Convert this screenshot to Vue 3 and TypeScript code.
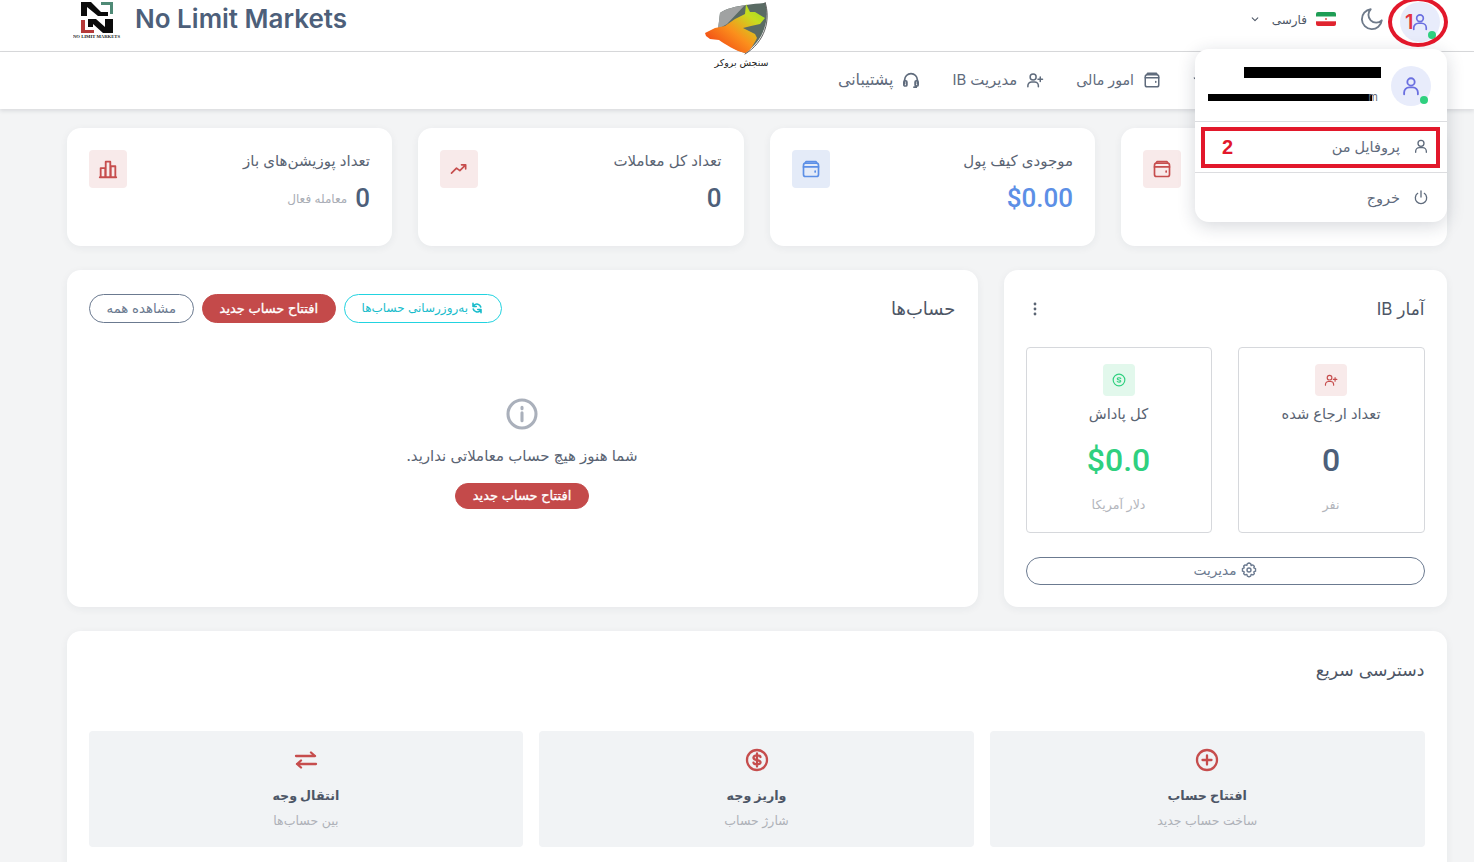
<script setup lang="ts">
interface Stat { title: string; value: string; sub?: string; icon: string; tone: string; covered?: boolean }
const stats: Stat[] = [
  { title: 'موجودی حساب‌ها', value: '$0.00', icon: 'wallet', tone: 'red', covered: true },
  { title: 'موجودی کیف پول', value: '$0.00', icon: 'wallet', tone: 'blue' },
  { title: 'تعداد کل معاملات', value: '0', icon: 'trend', tone: 'red' },
  { title: 'تعداد پوزیشن‌های باز', value: '0', sub: 'معامله فعال', icon: 'bars', tone: 'red' }
]
const quick = [
  { title: 'افتتاح حساب', sub: 'ساخت حساب جدید', icon: 'plus' },
  { title: 'واریز وجه', sub: 'شارژ حساب', icon: 'dollar' },
  { title: 'انتقال وجه', sub: 'بین حساب‌ها', icon: 'swap' }
]
</script>

<template>
  <div class="page" dir="rtl">
    <header class="topbar">
      <div class="actions">
        <div class="avatar">
          <svg class="ico-20" viewBox="0 0 24 24"><circle cx="12" cy="7.5" r="4" /><path d="M4.5 21v-2a5.5 5.5 0 0 1 5.5-5.5h4a5.5 5.5 0 0 1 5.5 5.5v2" /></svg>
          <span class="dot"></span>
        </div>
        <svg class="moon" viewBox="0 0 24 24"><path d="M21 13.2A9.2 9.2 0 1 1 10.8 3a7.2 7.2 0 0 0 10.2 10.2z" /></svg>
        <div class="lang">
          <svg class="flag" viewBox="0 0 20 14"><rect width="20" height="4.7" fill="#1f9d55" /><rect y="4.7" width="20" height="4.6" fill="#fff" /><rect y="9.3" width="20" height="4.7" fill="#e0242f" /><circle cx="10" cy="7" r="1" fill="#d9534f" /></svg>
          <span>فارسی</span>
          <svg class="chev" viewBox="0 0 10 6"><path d="M1.5 1l3.5 3.5L8.500 1" /></svg>
        </div>
      </div>
      <div class="brand" dir="ltr">
        <svg class="brand-logo" viewBox="0 0 48 38">
          <path d="M8 1h10l10 10h7v4H25L14 6v9H8z" fill="#0b0b0b" />
          <path d="M28 1h12v12h-3V4h-9z" fill="#4f8a76" />
          <path d="M8 19h4v10h9v3H8z" fill="#b53a3a" />
          <path d="M15 18h8l9 8v-8h8v14H30L20 23v3h-5z" fill="#0b0b0b" />
          <text x="0" y="37" textLength="47" lengthAdjust="spacingAndGlyphs" class="brand-mini">NO LIMIT MARKETS</text>
        </svg>
        <span class="brand-name">No Limit Markets</span>
      </div>
    </header>

    <nav class="navbar">
      <a class="nav-item">
        <span class="covered">داشبورد</span>
        <svg class="chev nav-chev" viewBox="0 0 10 6"><path d="M1.5 1l3.5 3.5L8.500 1" /></svg>
      </a>
      <a class="nav-item">
        <svg class="ico-18" viewBox="0 0 24 24"><rect x="3" y="5" width="18" height="16" rx="2.500" /><path d="M3 9h18M17 14v1M5 5l1-2h12l1 2" /></svg>
        <span>امور مالی</span>
      </a>
      <a class="nav-item nav-ib">
        <svg class="ico-18" viewBox="0 0 24 24"><circle cx="9.500" cy="8" r="4" /><path d="M2.500 21v-1.500a5 5 0 0 1 5-5h4a5 5 0 0 1 5 5V21M19 8v6M16 11h6" /></svg>
        <span>مدیریت IB</span>
      </a>
      <a class="nav-item nav-support">
        <svg class="ico-18 thick" viewBox="0 0 24 24"><path d="M3.500 17v-5a8.500 8.500 0 0 1 17 0v5" /><rect x="2.500" y="13" width="4" height="7" rx="1.500" /><rect x="17.500" y="13" width="4" height="7" rx="1.500" /><path d="M19 20v1.500h-3" /></svg>
        <span>پشتیبانی</span>
      </a>
    </nav>

    <main class="content">
      <section class="stats">
        <article v-for="s in stats" :key="s.title" class="card stat">
          <div class="stat-body" :class="{ covered: s.covered }">
            <div class="stat-title">{{ s.title }}</div>
            <div class="stat-line">
              <span class="stat-value" :class="s.tone === 'blue' ? 'is-blue' : ''" dir="ltr">{{ s.value }}</span>
              <span v-if="s.sub" class="stat-sub">{{ s.sub }}</span>
            </div>
          </div>
          <div class="stat-icon" :class="s.tone">
            <svg v-if="s.icon === 'wallet'" class="ico-20" viewBox="0 0 24 24"><rect x="3" y="5" width="18" height="16" rx="2.500" /><path d="M3 9.500h18M17 14.500v1M5 5l1-2h12l1 2" /></svg>
            <svg v-else-if="s.icon === 'trend'" class="ico-20" viewBox="0 0 24 24"><path d="M3 17l6-6 4 3 7-7M15 7h5v5" /></svg>
            <svg v-else class="ico-22" viewBox="0 0 24 24"><path d="M3 21h18M4 21V11h5v10M9.500 21V4h5v17M15 21V9h5v12" /></svg>
          </div>
        </article>
      </section>

      <section class="middle">
        <article class="card ib">
          <div class="card-head">
            <h3 class="h-ib">آمار IB</h3>
            <svg class="kebab" viewBox="0 0 4 14"><circle cx="2" cy="2" r="1.400" /><circle cx="2" cy="7" r="1.400" /><circle cx="2" cy="12" r="1.400" /></svg>
          </div>
          <div class="ib-grid">
            <div class="ib-box">
              <div class="ib-icon red">
                <svg class="ico-14" viewBox="0 0 24 24"><circle cx="9.500" cy="8" r="4" /><path d="M2.500 21v-1.500a5 5 0 0 1 5-5h4a5 5 0 0 1 5 5V21M19 8v6M16 11h6" /></svg>
              </div>
              <div class="ib-title">تعداد ارجاع شده</div>
              <div class="ib-value">0</div>
              <div class="ib-sub">نفر</div>
            </div>
            <div class="ib-box">
              <div class="ib-icon green">
                <svg class="ico-14" viewBox="0 0 24 24"><circle cx="12" cy="12" r="10" /><path d="M15 9.500c-.6-1.800-5.400-2-6 .2-.5 2.800 6.500 1.600 6 4.400-.6 2.100-5.400 1.900-6 .2" /></svg>
              </div>
              <div class="ib-title">کل پاداش</div>
              <div class="ib-value is-green" dir="ltr">$0.0</div>
              <div class="ib-sub">دلار آمریکا</div>
            </div>
          </div>
          <button class="pill outline block">
            <svg class="gear" viewBox="0 0 24 24"><circle cx="12" cy="12" r="3" /><path d="M12 1.500l2.500 1.100.7 2.600 2.600-.8 2.200 1.900-.8 2.600 2.600 1.100v3.800l-2.600 1.100.8 2.600-2.200 1.900-2.600-.8-.7 2.600-2.500 1.100-2.500-1.100-.7-2.600-2.600.8-2.200-1.900.8-2.600-2.600-1.100V9.900l2.600-1.100-.8-2.600 2.200-1.900 2.600.8.700-2.600z" /></svg>
            <span>مدیریت</span>
          </button>
        </article>

        <article class="card accounts">
          <div class="card-head">
            <h3 class="h-acc">حساب‌ها</h3>
            <div class="acc-actions">
              <button class="pill cyan">
                <svg class="ico-12 sync" viewBox="0 0 24 24"><path d="M19.500 10A8 8 0 0 0 6 6.500L4 9M4 2.500V9h6.500M4.500 14A8 8 0 0 0 18 17.500l2-2.500M20 21.500V15h-6.500" /></svg>
                <span>به‌روزرسانی حساب‌ها</span>
              </button>
              <button class="pill solid">افتتاح حساب جدید</button>
              <button class="pill outline thin">مشاهده همه</button>
            </div>
          </div>
          <div class="empty">
            <svg class="info" viewBox="0 0 24 24"><circle cx="12" cy="12" r="10.500" /><path d="M12 11v6M12 7v1" /></svg>
            <p>شما هنوز هیچ حساب معاملاتی ندارید.</p>
            <button class="pill solid small">افتتاح حساب جدید</button>
          </div>
        </article>
      </section>

      <section class="card quick">
        <h3>دسترسی سریع</h3>
        <div class="quick-grid">
          <div v-for="q in quick" :key="q.title" class="quick-item">
            <svg class="ico-24" viewBox="0 0 24 24">
              <template v-if="q.icon === 'plus'"><circle cx="12" cy="12" r="10" /><path d="M12 7.500v9M7.500 12h9" /></template>
              <template v-else-if="q.icon === 'dollar'"><circle cx="12" cy="12" r="10" /><path d="M15.500 9c-.5-2-6.500-2.300-7 .5-.5 3.500 7.500 1.800 7 5-.5 2.500-6.500 2.300-7 .2M12 5.500v13" /></template>
              <template v-else><path d="M2 8h19M17 4.500L21 8M22 16H3M7 12.500L3 16M7 19.500L3 16" /></template>
            </svg>
            <div class="quick-title">{{ q.title }}</div>
            <div class="quick-sub">{{ q.sub }}</div>
          </div>
        </div>
      </section>
    </main>

    <!-- overlays -->
    <div class="center-logo">
      <svg viewBox="0 0 66 54" class="bull">
        <defs>
          <linearGradient id="bullGrad" x1="0" y1="1" x2="1" y2="0">
            <stop offset="0" stop-color="#ee2c12" />
            <stop offset=".45" stop-color="#fb8f1c" />
            <stop offset=".75" stop-color="#c8dc1f" />
            <stop offset="1" stop-color="#8fe025" />
          </linearGradient>
        </defs>
        <path d="M15 11C22 6 35 3 60 1c4 13 2 35-20 50C28 48 15 38 13 28z" fill="#5a6b64" />
        <path d="M15 11c7-5 15-6 25-8L22 22l-9 5z" fill="#a0a2a2" />
        <path d="M0 31l10-5 10-2 10-7 10-5 1-10 4 8h5l10 6-5 6-9 2-8 2 12 6 2 4c-4 8-8 14-12 15-10-2-20-9-26-13l-9-1-4-3z" fill="url(#bullGrad)" />
        <path d="M60 0c6 18 0 40-20 52" fill="none" stroke="#333" stroke-width=".8" />
      </svg>
      <span class="bull-text">سنجش بروکر</span>
    </div>

    <div class="menu">
      <div class="menu-user">
        <div class="avatar">
          <svg class="ico-22" viewBox="0 0 24 24"><circle cx="12" cy="7.500" r="4" /><path d="M4.500 21v-2a5.500 5.500 0 0 1 5.500-5.500h4a5.500 5.500 0 0 1 5.500 5.500v2" /></svg>
          <span class="dot"></span>
        </div>
        <div class="menu-id">
          <div class="mask mask-a"></div>
          <div class="mask mask-b"></div>
          <span class="mail-end">m</span>
        </div>
      </div>
      <div class="menu-row">
        <svg class="ico-16" viewBox="0 0 24 24"><circle cx="12" cy="8" r="4.500" /><path d="M4 21.500v-1.500a5.500 5.500 0 0 1 5.500-5.500h5a5.500 5.500 0 0 1 5.500 5.500v1.500" /></svg>
        <span>پروفایل من</span>
      </div>
      <div class="menu-row">
        <svg class="ico-16" viewBox="0 0 24 24"><path d="M12 3v9M7 6.500a8.500 8.500 0 1 0 10 0" /></svg>
        <span>خروج</span>
      </div>
    </div>

    <div class="mark-ring"></div>
    <span class="mark-one">1</span>
    <div class="mark-box"><span>2</span></div>
  </div>
</template>

<style>
html, body { margin: 0; overflow: hidden; background: #f3f4f5; }
</style>

<style scoped>
* { box-sizing: border-box; }
.page {
  position: relative;
  width: 1474px;
  height: 862px;
  overflow: hidden;
  background: #f3f4f5;
  font-family: Inter, "DejaVu Sans", sans-serif;
  color: #5a6473;
}
svg { fill: none; stroke: currentColor; stroke-width: 2; stroke-linecap: round; stroke-linejoin: round; flex: none; }
.covered { visibility: hidden; }
.ico-12 { width: 12px; height: 12px; }
.ico-14 { width: 14px; height: 14px; }
.ico-16 { width: 16px; height: 16px; }
.ico-18 { width: 18px; height: 18px; }
.ico-20 { width: 20px; height: 20px; }
.ico-22 { width: 22px; height: 22px; }
.ico-24 { width: 24px; height: 24px; stroke-width: 2.300; }
.gear { width: 16px; height: 16px; stroke-width: 2.100; }
.thick { stroke-width: 2.300; }
.sync { stroke-width: 3.200; }

.topbar {
  height: 52px;
  background: #fff;
  border-bottom: 1px solid #d9dadc;
  display: flex;
  justify-content: space-between;
  align-items: flex-start;
  padding: 0 34px 0 73px;
}
.actions { display: flex; align-items: center; height: 44px; }
.avatar {
  position: relative;
  width: 40px;
  height: 40px;
  border-radius: 50%;
  background: #e8ecfb;
  color: #6a6fe0;
  display: flex;
  align-items: center;
  justify-content: center;
  flex: none;
}
.dot {
  position: absolute;
  right: 3px;
  bottom: 2px;
  width: 8px;
  height: 8px;
  border-radius: 50%;
  background: #2fd07f;
}
.actions .dot { right: 4px; bottom: 3px; }
.moon { width: 26px; height: 26px; margin: 0 15px 6px 0; color: #6e7a8a; stroke-width: 1.700; }
.lang { display: flex; align-items: center; gap: 9px; margin: 0 23px 6px 0; font-size: 12px; color: #4c5666; }
.flag { width: 20px; height: 14px; stroke: none; border-radius: 2px; }
.chev { width: 8px; height: 5px; margin-right: 4px; stroke-width: 1.300; color: #4c5666; }
.nav-chev { margin-right: 7px; }
.brand { display: flex; align-items: flex-start; gap: 14px; }
.brand-logo { width: 48px; height: 38px; stroke: none; margin-top: 1px; }
.brand-mini { font-family: "Liberation Serif", serif; font-size: 4px; fill: #222; stroke: none; font-weight: 700; }
.brand-name { font-size: 26px; line-height: 37px; font-weight: 600; color: #4d5f7a; }

.navbar {
  height: 57px;
  background: #fff;
  box-shadow: 0 2px 4px rgba(30, 40, 60, .12);
  display: flex;
  align-items: center;
  gap: 32px;
  padding: 0 210px 2px 0;
}
.nav-item { display: flex; align-items: center; gap: 9px; font-size: 14.200px; color: #5f6b7c; }
.nav-ib { font-size: 14.900px; }
.nav-support { font-size: 15.900px; }

.content { padding: 19px 27.500px 0 66.500px; }
.card { background: #fff; border-radius: 14px; box-shadow: 0 2px 8px rgba(40, 50, 70, .06); }
.stats { display: grid; grid-template-columns: repeat(4, 1fr); gap: 26px; }
.stat { height: 118px; padding: 22px; display: flex; justify-content: space-between; align-items: flex-start; }
.stat-title { font-size: 15px; line-height: 22px; color: #5a6473; }
.stat-line { display: flex; align-items: center; gap: 8px; margin-top: 9px; height: 34px; }
.stat-value { font-family: Roboto, sans-serif; font-size: 26px; font-weight: 500; color: #4d5f7a; }
.is-blue { color: #5c8fe6; }
.stat-sub { font-size: 12px; color: #a9adb5; }
.stat-icon { width: 38px; height: 38px; border-radius: 4px; display: flex; align-items: center; justify-content: center; }
.stat-icon.red { background: #f8eaea; color: #c64d4d; }
.stat-icon.blue { background: #e4ebf8; color: #5c8fe6; }

.middle { display: grid; grid-template-columns: 443px 1fr; gap: 26px; margin-top: 24px; }
.ib { height: 337px; padding: 22px; }
.card-head { display: flex; justify-content: space-between; align-items: center; height: 33px; }
h3 { margin: 0; font-weight: 400; color: #4d5666; }
.h-ib { font-size: 17px; }
.h-acc { font-size: 18px; }
.kebab { width: 4px; height: 14px; margin-left: 7px; fill: #5a6473; stroke: none; }
.ib-grid { display: grid; grid-template-columns: 187px 186px; gap: 26px; margin-top: 22px; }
.ib-box {
  height: 186px;
  border: 1px solid #d6d8dc;
  border-radius: 4px;
  display: flex;
  flex-direction: column;
  align-items: center;
  padding-top: 16px;
}
.ib-icon { width: 32px; height: 32px; border-radius: 4px; display: flex; align-items: center; justify-content: center; }
.ib-icon.red { background: #f8eaea; color: #c64d4d; }
.ib-icon.green { background: #e2f8ec; color: #2fd07f; }
.ib-title { font-size: 14.700px; line-height: 20px; margin-top: 8px; color: #5a6473; }
.ib-value { font-family: Roboto, sans-serif; font-size: 32px; line-height: 40px; font-weight: 500; color: #4d5f7a; margin-top: 16px; }
.is-green { color: #2fd07f; }
.ib-sub { font-size: 12.600px; line-height: 16px; color: #b3b6bc; margin-top: 17px; }

.pill {
  font: inherit;
  font-size: 13.700px;
  height: 29px;
  border-radius: 15px;
  display: inline-flex;
  align-items: center;
  justify-content: center;
  gap: 4px;
  background: #fff;
  padding: 0 17px 2px;
  border: 1px solid #6b7a90;
  color: #6b7a90;
  white-space: nowrap;
}
.thin { font-size: 13.300px; }
.block { width: 100%; height: 28px; margin-top: 24px; }
.cyan { border-color: #22d3e0; color: #18bccb; font-size: 12px; gap: 3px; padding-right: 18px; }
.solid {
  background: #c44a4a;
  border-color: #c44a4a;
  color: #fff;
  font-size: 13px;
  font-weight: 400;
  -webkit-text-stroke: .3px #fff;
}
.small { height: 26px; }
.accounts { height: 337px; padding: 22px; }
.acc-actions { display: flex; gap: 7.500px; }
.empty { display: flex; flex-direction: column; align-items: center; margin-top: 73px; }
.info { width: 32px; height: 32px; color: #aab0bb; stroke-width: 2.300; }
.empty p { margin: 16px 0 0; font-size: 15px; line-height: 20px; color: #5a6473; }
.empty .pill { margin-top: 17px; }

.quick { margin-top: 24px; height: 260px; padding: 22px; }
.quick h3 { line-height: 34px; font-size: 17.300px; }
.quick-grid { display: grid; grid-template-columns: repeat(3, 1fr); gap: 16px; margin-top: 44px; }
.quick-item {
  height: 116px;
  background: #f1f3f5;
  border-radius: 4px;
  display: flex;
  flex-direction: column;
  align-items: center;
  padding-top: 17px;
  color: #c64d4d;
}
.quick-title { font-size: 12.700px; line-height: 20px; font-weight: 700; color: #4d5666; margin-top: 14px; }
.quick-sub { font-size: 12.500px; line-height: 16px; color: #aeb1b8; margin-top: 7px; }

.center-logo {
  position: absolute;
  left: 705px;
  top: 2px;
  width: 66px;
  display: flex;
  flex-direction: column;
  align-items: center;
}
.bull { width: 66px; height: 54px; stroke: none; }
.bull-text { font-size: 9.500px; line-height: 12px; margin-top: 1px; margin-left: 7px; color: #222; white-space: nowrap; }

.menu {
  position: absolute;
  left: 1195px;
  top: 49px;
  width: 252px;
  height: 173px;
  background: #fff;
  border-radius: 14px;
  box-shadow: 0 4px 18px rgba(30, 40, 60, .18);
  z-index: 2;
}
.menu-user { height: 72px; padding: 17px 16px 0 14px; display: flex; gap: 10px; }
.menu-id { flex: 1; position: relative; }
.mask { position: absolute; background: #000; }
.mask-a { right: 0; top: 1px; width: 137px; height: 11px; }
.mask-b { right: 9px; top: 28px; width: 164px; height: 7px; }
.mail-end { position: absolute; right: 3px; top: 24px; font-size: 11px; line-height: 14px; color: #6b7280; }
.menu-row {
  height: 51px;
  border-top: 1px solid #dcdde0;
  display: flex;
  align-items: center;
  gap: 13px;
  padding: 0 18px 2px;
  font-size: 14.500px;
  color: #5f6b7c;
}

.mark-ring {
  position: absolute;
  left: 1388px;
  top: -3px;
  width: 60px;
  height: 50px;
  border: 4px solid #e2182b;
  border-radius: 50%;
  z-index: 3;
}
.mark-one {
  position: absolute;
  left: 1405px;
  top: 10px;
  font-size: 20px;
  line-height: 24px;
  font-weight: 600;
  color: #e2343f;
  z-index: 3;
}
.mark-box {
  position: absolute;
  left: 1201px;
  top: 127px;
  width: 239px;
  height: 41px;
  border: 4px solid #e2182b;
  z-index: 3;
  display: flex;
  align-items: center;
  padding-left: 17px;
  direction: ltr;
  font-family: "Liberation Sans", sans-serif;
  font-size: 20px;
  font-weight: 700;
  color: #e2182b;
}
</style>
